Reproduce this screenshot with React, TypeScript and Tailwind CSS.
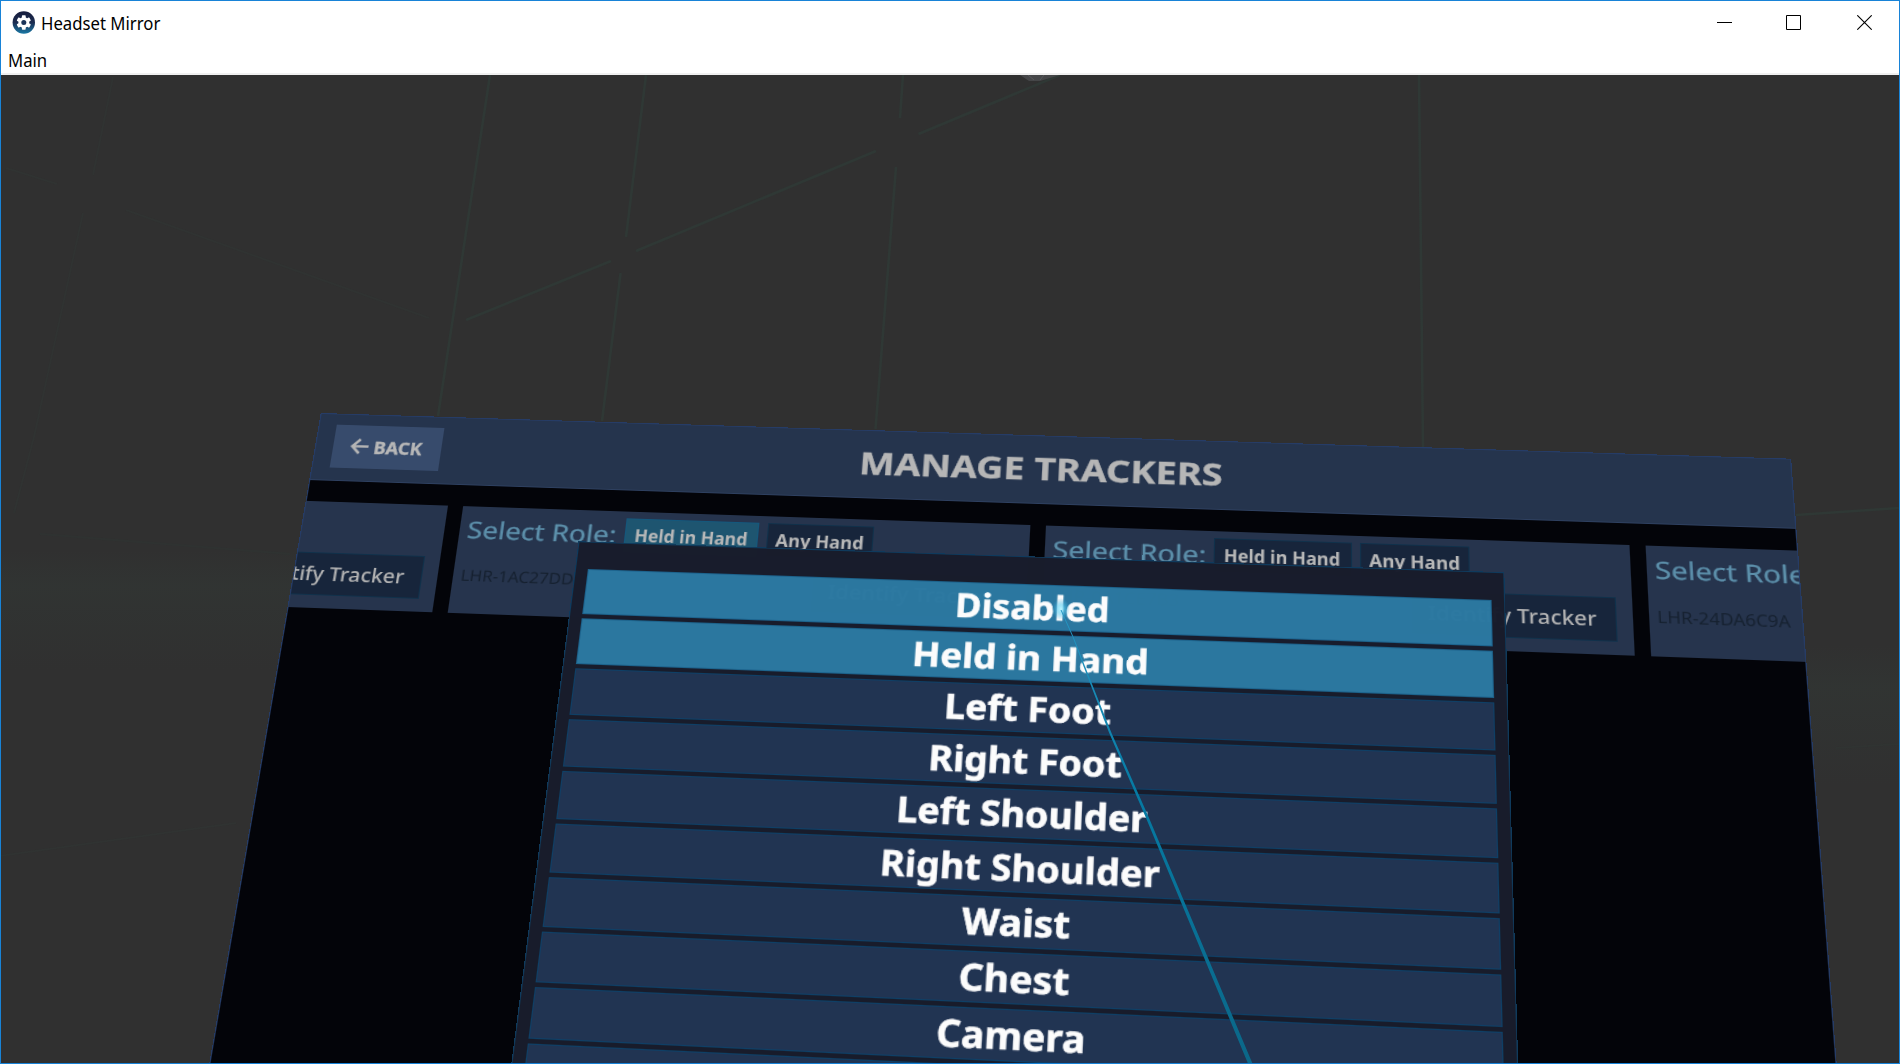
import { useLayoutEffect, useRef, useState, type ReactNode } from 'react';

type Point = [number, number];
type Quad = [Point, Point, Point, Point];

/** Solves the projective transform that carries one quad onto another. */
function projection(src: Quad, dst: Quad): string {
  const rows: number[][] = [];
  src.forEach(([x, y], i) => {
    const [u, v] = dst[i];
    rows.push([x, y, 1, 0, 0, 0, -u * x, -u * y, u]);
    rows.push([0, 0, 0, x, y, 1, -v * x, -v * y, v]);
  });
  for (let i = 0; i < 8; i++) {
    let pivot = i;
    for (let r = i; r < 8; r++) if (Math.abs(rows[r][i]) > Math.abs(rows[pivot][i])) pivot = r;
    [rows[i], rows[pivot]] = [rows[pivot], rows[i]];
    for (let r = 0; r < 8; r++) {
      if (r === i) continue;
      const f = rows[r][i] / rows[i][i];
      for (let c = i; c < 9; c++) rows[r][c] -= f * rows[i][c];
    }
  }
  const h = rows.map((row, i) => row[8] / row[i]);
  return `matrix3d(${[h[0], h[3], 0, h[6], h[1], h[4], 0, h[7], 0, 0, 1, 0, h[2], h[5], 0, 1].join(',')})`;
}

const dashboardTransform = projection(
  [[0, 0], [1337, 0], [1337, 205], [0, 205]],
  [[319.7, 338], [1790.3, 383.7], [1805.7, 588], [286.3, 533]],
);
const modalTransform = projection(
  [[12, 27], [832, 27], [832, 411], [12, 411]],
  [[586.9, 494], [1490.7, 525], [1501.9, 957], [534, 912]],
);

/** Text stretched horizontally to an exact width. */
function Fit({ width, className = '', children }: { width: number; className?: string; children: ReactNode }) {
  const ref = useRef<HTMLSpanElement>(null);
  const [scale, setScale] = useState(1);
  useLayoutEffect(() => {
    if (ref.current) setScale(width / ref.current.offsetWidth);
  }, [width]);
  return (
    <span className={`block shrink-0 leading-none ${className}`} style={{ width }}>
      <span ref={ref} className="inline-block origin-left whitespace-nowrap" style={{ transform: `scaleX(${scale})` }}>
        {children}
      </span>
    </span>
  );
}

function GearLogo() {
  return (
    <svg className="size-[23px]" viewBox="0 0 23 23">
      <defs>
        <linearGradient id="logo" x1="0" y1="0" x2="0" y2="1">
          <stop offset="0" stopColor="#161c3c" />
          <stop offset="0.5" stopColor="#1b2c50" />
          <stop offset="1" stopColor="#1a79a6" />
        </linearGradient>
      </defs>
      <circle cx="11.8" cy="11.5" r="11.2" fill="url(#logo)" />
      <g fill="#fff" transform="translate(0.3 0)">
        <circle cx="11.5" cy="11.5" r="5.4" />
        {[0, 60, 120, 180, 240, 300].map((a) => (
          <rect key={a} x="9.6" y="4.3" width="3.8" height="4" rx="0.7" transform={`rotate(${a} 11.5 11.5)`} />
        ))}
      </g>
      <circle cx="11.8" cy="11.5" r="2.5" fill="#1b3459" />
    </svg>
  );
}

function TitleBar() {
  return (
    <div className="flex h-[42px] shrink-0 items-start bg-white pl-[11px] pr-[27px]">
      <div className="pt-[9.5px]"><GearLogo /></div>
      <Fit width={119} className="ml-[6px] mt-[13px] text-[18px] text-black">Headset Mirror</Fit>
      <div className="ml-auto flex gap-[54px] pt-[14px] text-black">
        <svg className="mr-0 size-[15px]" viewBox="0 0 15 15"><path d="M0 7.5H15" stroke="currentColor" /></svg>
        <svg className="size-[15px]" viewBox="0 0 15 15"><path d="M.5 .5H14.5V14.5H.5Z" fill="none" stroke="currentColor" /></svg>
        <svg className="ml-[2px] size-[15px]" viewBox="0 0 15 15"><path d="M.3 .3L14.7 14.7M14.7 .3L.3 14.7" stroke="currentColor" strokeWidth="1.1" /></svg>
      </div>
    </div>
  );
}

function RoomGrid() {
  return (
    <svg className="absolute inset-0 size-full" viewBox="1 75 1898 988">
      <defs>
        <linearGradient id="floor" x1="0" y1="0" x2="0" y2="1">
          <stop offset="0" stopColor="#313533" stopOpacity="0" />
          <stop offset="0.3" stopColor="#313533" stopOpacity="0.8" />
          <stop offset="1" stopColor="#313533" stopOpacity="0" />
        </linearGradient>
      </defs>
      <rect x="0" y="550" width="300" height="120" fill="url(#floor)" />
      <rect x="1800" y="645" width="100" height="140" fill="url(#floor)" />
      <g fill="none" stroke="#2f3835" strokeWidth="2.6">
        <path d="M490 75L438 416M646 75L626 237M620.6 273L602 421M903 75L900 118M896 167L875.5 429" />
        <path d="M1060 75L918.5 134M876 151L636 251M611 261L466 320M1419 75L1423 447M1796 515L1899 508" />
      </g>
      <g fill="none" stroke="#2f3533" strokeWidth="2" opacity="0.5">
        <path d="M113 77L93 175M83 213L34 437L14 513M6 168L57 184M126 210L429 318" />
        <path d="M40 534L290 554M0 856L236 823M1836 748L1899 744" />
      </g>
      <path d="M1020 75H1060L1050 78L1040 81H1029Z" fill="#454648" />
      <path d="M1028 75L1034 80M1044 75L1040 80" stroke="#56575a" />
    </svg>
  );
}

function RoleButton({ label, width, textWidth, active }: { label: string; width: string; textWidth: number; active?: boolean }) {
  return (
    <div className={`flex h-[35px] items-center justify-center border ${width} ${active ? 'border-[#13587d] bg-[#1e5570]' : 'border-[#10314b] bg-[#17253b]'}`}>
      <Fit width={textWidth} className="text-[18.5px] font-bold text-[#b8b8b8]">{label}</Fit>
    </div>
  );
}

function TrackerCard({ serial, serialWidth, active }: { serial: string; serialWidth: number; active?: boolean }) {
  return (
    <div className="flex h-[110px] w-[515.3px] shrink-0 flex-col bg-[#26344d] pl-[7px] pr-[14px] pt-[6.5px]">
      <div className="flex items-center">
        <Fit width={136} className="-mt-px mr-[7.5px] text-[24px] text-[#5c8faa] [-webkit-text-stroke:0.3px_#5c8faa]">Select Role:</Fit>
        <RoleButton label="Held in Hand" width="w-[121.5px]" textWidth={103} active={active} />
        <div className="w-[7.5px]" />
        <RoleButton label="Any Hand" width="w-[96px]" textWidth={79.5} />
      </div>
      <div className="mt-[11px] flex items-center justify-between">
        <Fit width={serialWidth} className="-mt-[6px] text-[15.8px] text-[#162130]">{serial}</Fit>
        <div className="flex h-[44px] w-[178px] items-center justify-center border border-[#10314b] bg-[#17253b]">
          <Fit width={145.5} className="-ml-[2px] text-[20px] font-medium text-[#b4b4b4]">Identify Tracker</Fit>
        </div>
      </div>
    </div>
  );
}

function Dashboard() {
  return (
    <div
      className="absolute left-0 top-0 flex h-[760px] w-[1337px] origin-top-left flex-col overflow-hidden border border-[#263c66] bg-[#030409]"
      style={{ transform: dashboardTransform }}
    >
      <div className="relative flex h-[71px] shrink-0 items-center justify-center border-b border-[#2e4060] bg-[#25344d]">
        <div className="absolute left-4 top-[11px] flex h-[46px] w-[100.5px] items-center bg-[#374b6c] pl-[15.5px]">
          <svg className="-mt-px mr-[5.5px] h-[17px] w-[17px] text-[#b4b4b4]" viewBox="0 0 17 17" fill="none" stroke="currentColor" strokeWidth="2.6">
            <path d="M8.8 1L1.8 8.5L8.8 16M2 8.5H17" />
          </svg>
          <Fit width={45.5} className="-mt-px text-[18px] font-bold text-[#b8b8b8] [-webkit-text-stroke:0.4px_#b8b8b8]">BACK</Fit>
        </div>
        <Fit width={329} className="-mt-[3px] text-[32px] font-bold text-[#b6b6b6] [-webkit-text-stroke:0.4px_#b6b6b6]">MANAGE TRACKERS</Fit>
      </div>
      <div className="-ml-[384px] mt-[22px] flex gap-[14px]">
        <TrackerCard serial="LHR-1A5B30C2" serialWidth={113.5} />
        <TrackerCard serial="LHR-1AC27DD8" serialWidth={111.5} active />
        <TrackerCard serial="LHR-0A1CE7B3" serialWidth={113.5} />
        <TrackerCard serial="LHR-24DA6C9A" serialWidth={113.5} />
      </div>
    </div>
  );
}

const roles: { name: string; width: number; lit?: boolean }[] = [
  { name: 'Disabled', width: 139, lit: true },
  { name: 'Held in Hand', width: 212, lit: true },
  { name: 'Left Foot', width: 148 },
  { name: 'Right Foot', width: 170 },
  { name: 'Left Shoulder', width: 219 },
  { name: 'Right Shoulder', width: 242 },
  { name: 'Waist', width: 93 },
  { name: 'Chest', width: 94 },
  { name: 'Camera', width: 126 },
];

function RoleMenu() {
  return (
    <div
      className="absolute left-0 top-0 flex h-[560px] w-[843.5px] origin-top-left flex-col gap-[4.5px] border border-[#0e3a5c] bg-[#171b2a] px-[11px] pt-[26px] opacity-[0.985]"
      style={{ transform: modalTransform }}
    >
      {roles.map((r) => (
        <div
          key={r.name}
          className={`flex h-[43.5px] shrink-0 items-center justify-center border ${r.lit ? 'border-[#1b638d] bg-[#2a78a1]' : 'border-[#0d4067] bg-[#203352]'}`}
        >
          <Fit width={r.width} className="text-[32px] font-bold text-white [-webkit-text-stroke:0.6px_white]">{r.name}</Fit>
        </div>
      ))}
      <div className="h-[43.5px] shrink-0 border border-[#0d4067] bg-[#203352]" />
    </div>
  );
}

function LaserPointer() {
  return (
    <svg className="absolute inset-0 size-full" viewBox="1 75 1898 988">
      <defs>
        <radialGradient id="glow">
          <stop offset="0" stopColor="#b8f3ff" stopOpacity="0.95" />
          <stop offset="0.4" stopColor="#5fd0f2" stopOpacity="0.6" />
          <stop offset="1" stopColor="#2fa8d8" stopOpacity="0" />
        </radialGradient>
        <linearGradient id="ray" x1="0" y1="0" x2="0" y2="1">
          <stop offset="0" stopColor="#2697c4" />
          <stop offset="0.4" stopColor="#067aa3" />
          <stop offset="1" stopColor="#0b6788" />
        </linearGradient>
      </defs>
      <ellipse cx="1061" cy="609" rx="9" ry="11" fill="url(#glow)" />
      <path d="M1060.5 610L1073 638L1083 665L1109.2 733L1145.6 817L1248.2 1064H1252.7L1148.6 817L1111.5 733L1084.5 665L1074 638L1061.5 610Z" fill="url(#ray)" />
    </svg>
  );
}

export default function App() {
  return (
    <div className="flex h-[1064px] w-[1900px] flex-col overflow-hidden border border-[#1883d7] bg-white font-['Noto_Sans',sans-serif]">
      <TitleBar />
      <div className="flex h-[32px] shrink-0 items-start border-b-2 border-[#f0f0f0] bg-white pl-[7px] pt-[8px]">
        <Fit width={39} className="text-[18px] text-black">Main</Fit>
      </div>
      <div className="relative min-h-0 flex-1 overflow-hidden bg-[#303030]">
        <RoomGrid />
        <Dashboard />
        <RoleMenu />
        <LaserPointer />
      </div>
    </div>
  );
}
